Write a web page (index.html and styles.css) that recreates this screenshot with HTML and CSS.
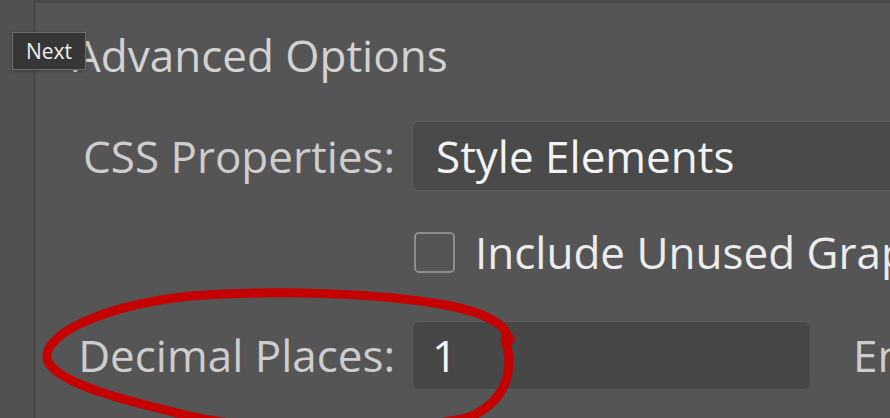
FILE: index.html
```html
<!DOCTYPE html>
<html lang="en">
<head>
<meta charset="utf-8">
<title>Advanced Options</title>
<link rel="stylesheet" href="styles.css">
</head>
<body>
<div class="window">
  <aside class="gutter"></aside>
  <main class="panel">
    <h2 class="title">Advanced Options</h2>
    <div class="form">
      <label class="lbl">CSS Properties:</label>
      <div class="select">Style Elements</div>

      <span class="lbl"></span>
      <label class="check"><span class="box"></span>Include Unused Graphic Styles</label>

      <label class="lbl lbl-dec">Decimal Places:</label>
      <div class="pair">
        <div class="input">1</div>
        <span class="lbl">Encoding:</span>
      </div>
    </div>
  </main>
</div>
<div class="tooltip">Next</div>
<svg class="annot" width="890" height="418" viewBox="0 0 890 418">
  <path d="M505 340 C515 370 506 400 472 416 C430 432 250 430 198 418 C150 406 62 388 48 362 C38 336 100 306 190 296 C280 289 380 294 440 304 C482 311 510 325 507 340" fill="none" stroke="#c40000" stroke-width="9" stroke-linecap="round" stroke-linejoin="round"/>
  <circle cx="508" cy="339" r="6.5" fill="#c40000"/>
</svg>
</body>
</html>
```
FILE: styles.css
```css
html, body {
  margin: 0;
  padding: 0;
}
body {
  width: 890px;
  height: 418px;
  overflow: hidden;
  position: relative;
  background: #535353;
  font-family: "Open Sans", "Noto Sans", sans-serif;
  color: #cfcfcf;
}
.window {
  display: flex;
  height: 100%;
}
.gutter {
  width: 33px;
  flex: none;
  background: #515151;
  border-right: 3px solid #4a4a4a;
}
.panel {
  flex: 1;
  border-top: 3px solid #4b4b4b;
  background: #555555;
  padding-left: 37px;
  min-width: 0;
}
.title {
  margin: 30px 0 0;
  font-size: 44px;
  font-weight: 400;
  line-height: 44px;
  color: #d2d2d2;
}
.form {
  display: grid;
  grid-template-columns: 359px 1fr;
  column-gap: 17px;
  margin-left: -37px;
  margin-top: 44px;
  row-gap: 0;
  font-size: 44px;
}
.lbl {
  text-align: right;
  color: #cdcdcd;
  line-height: 70px;
  white-space: nowrap;
}
.select {
  height: 68px;
  line-height: 68px;
  width: 600px;
  background: #4a4a4a;
  border: 1px solid #5e5e5e;
  border-radius: 6px;
  padding-left: 23px;
  color: #f2f2f2;
  white-space: nowrap;
}
.check {
  display: flex;
  align-items: center;
  gap: 20px;
  height: 82px;
  margin-top: 20px;
  white-space: nowrap;
  color: #ececec;
}
.box {
  width: 37px;
  height: 37px;
  border: 2px solid #8e8e8e;
  border-radius: 5px;
  flex: none;
  margin-left: 2px;
}
.lbl-dec {
  margin-top: 27px;
}
.pair {
  display: flex;
  align-items: center;
  gap: 42px;
  margin-top: 27px;
  white-space: nowrap;
}
.input {
  width: 378px;
  height: 67px;
  line-height: 67px;
  background: #474747;
  border: 1px solid #5a5a5a;
  border-radius: 7px;
  padding-left: 19px;
  color: #f4f4f4;
  flex: none;
}
.pair .lbl {
  text-align: left;
}
.tooltip {
  position: absolute;
  left: 12px;
  top: 32px;
  width: 74px;
  height: 38px;
  box-sizing: border-box;
  background: #363636;
  border: 1px solid #6e6e6e;
  color: #f0f0f0;
  font-size: 21px;
  line-height: 36px;
  text-align: center;
  box-shadow: 0 1px 3px rgba(0,0,0,0.3);
}
.annot {
  position: absolute;
  left: 0;
  top: 0;
  pointer-events: none;
}
```
